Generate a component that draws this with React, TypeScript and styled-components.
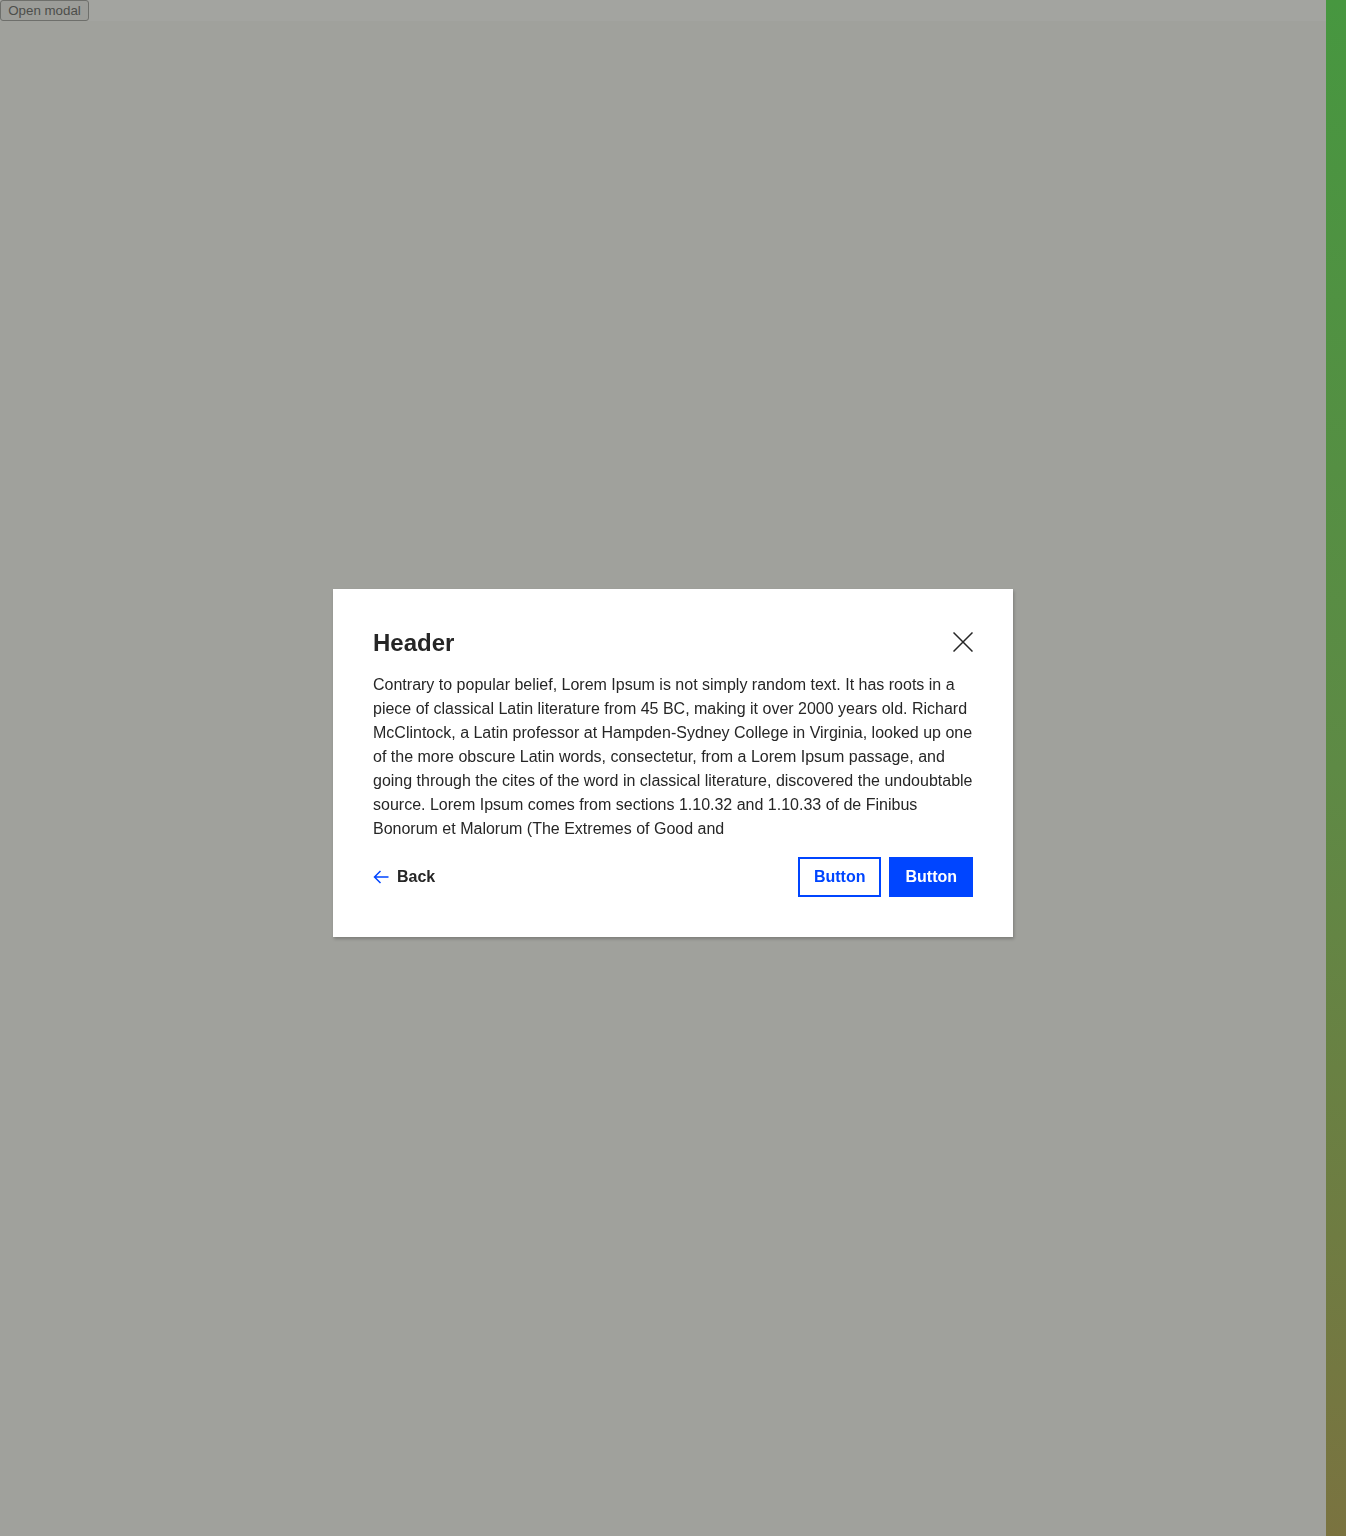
import React from 'react'
import styled, { createGlobalStyle } from 'styled-components'

const GlobalStyle = createGlobalStyle`
  html, body {
    margin: 0;
    padding: 0;
  }
  body {
    font-family: "Liberation Sans", Arial, sans-serif;
    background: #a0a19c;
  }
`

const Page = styled.div`
  display: flex;
  width: 1346px;
  height: 1536px;
  overflow: hidden;
`

const Main = styled.div`
  flex: 1;
  display: flex;
  flex-direction: column;
  background: #a0a19c;
`

const TopBar = styled.div`
  height: 21px;
  background: #a3a4a0;
  display: flex;
  align-items: flex-start;
`

const OpenButton = styled.button`
  font-family: "Liberation Sans", Arial, sans-serif;
  font-size: 13.33px;
  height: 21px;
  width: 89px;
  padding: 0 7px;
  margin: 0;
  color: #4d4e4b;
  background: #9c9d99;
  border: 1px solid #6e6f6b;
  border-radius: 3px;
  line-height: 19px;
  text-align: center;
`

const SideStrip = styled.div`
  width: 20px;
  background: linear-gradient(180deg, #479740 0%, #5e8a45 50%, #7a7340 100%);
`

// overlay spans the whole viewport so the dialog centres on it
const Overlay = styled.div`
  position: fixed;
  left: 0;
  top: 0;
  width: 1346px;
  height: 1536px;
  display: flex;
  align-items: center;
  justify-content: center;
  padding-bottom: 10px;
  box-sizing: border-box;
  pointer-events: none;
`

const Modal = styled.div`
  width: 680px;
  box-sizing: border-box;
  padding: 40px;
  background: #ffffff;
  box-shadow: 1px 2px 3px rgba(0, 0, 0, 0.22);
  display: flex;
  flex-direction: column;
  color: #262626;
  pointer-events: auto;
`

const HeaderRow = styled.div`
  display: flex;
  align-items: center;
  justify-content: space-between;
  height: 28px;
  margin-bottom: 16px;
`

const Title = styled.h2`
  margin: 0;
  font-size: 24px;
  line-height: 28px;
  font-weight: 700;
  color: #262626;
`

const CloseButton = styled.button`
  width: 20px;
  height: 20px;
  padding: 0;
  border: 0;
  background: none;
  display: flex;
  align-items: center;
  justify-content: center;
  margin-top: -3px;
  cursor: pointer;
`

const Body = styled.p`
  margin: 0;
  font-size: 16px;
  line-height: 24px;
  color: #262626;
`

const Footer = styled.div`
  margin-top: 16px;
  display: flex;
  align-items: center;
  justify-content: space-between;
`

const BackLink = styled.button`
  display: flex;
  align-items: center;
  gap: 8px;
  padding: 0;
  border: 0;
  background: none;
  font-family: "Liberation Sans", Arial, sans-serif;
  font-size: 16px;
  font-weight: 700;
  color: #262626;
  cursor: pointer;
`

const Actions = styled.div`
  display: flex;
  gap: 8px;
`

const ActionButton = styled.button<{ $primary?: boolean }>`
  height: 40px;
  padding: 0 14px;
  box-sizing: border-box;
  font-family: "Liberation Sans", Arial, sans-serif;
  font-size: 16px;
  font-weight: 700;
  border: 2px solid #0045ff;
  border-radius: 0;
  background: ${p => (p.$primary ? '#0045ff' : '#ffffff')};
  color: ${p => (p.$primary ? '#ffffff' : '#0045ff')};
  cursor: pointer;
`

const text =
  'Contrary to popular belief, Lorem Ipsum is not simply random text. It has roots in a piece of classical Latin literature from 45 BC, making it over 2000 years old. Richard McClintock, a Latin professor at Hampden-Sydney College in Virginia, looked up one of the more obscure Latin words, consectetur, from a Lorem Ipsum passage, and going through the cites of the word in classical literature, discovered the undoubtable source. Lorem Ipsum comes from sections 1.10.32 and 1.10.33 of de Finibus Bonorum et Malorum (The Extremes of Good and'

export default function App() {
  return (
    <>
      <GlobalStyle />
      <Page>
        <Main>
          <TopBar>
            <OpenButton>Open modal</OpenButton>
          </TopBar>
        </Main>
        <SideStrip />
      </Page>
      <Overlay>
        <Modal>
          <HeaderRow>
            <Title>Header</Title>
            <CloseButton aria-label="Close">
              <svg width="20" height="20" viewBox="0 0 20 20">
                <path d="M0.5 0.5 L19.5 19.5 M19.5 0.5 L0.5 19.5" stroke="#262626" strokeWidth="1.5" fill="none" />
              </svg>
            </CloseButton>
          </HeaderRow>
          <Body>{text}</Body>
          <Footer>
            <BackLink>
              <svg width="16" height="16" viewBox="0 0 16 16">
                <path d="M15.5 8 H1.5 M7.5 2 L1.5 8 L7.5 14" stroke="#0045ff" strokeWidth="1.5" fill="none" />
              </svg>
              Back
            </BackLink>
            <Actions>
              <ActionButton>Button</ActionButton>
              <ActionButton $primary>Button</ActionButton>
            </Actions>
          </Footer>
        </Modal>
      </Overlay>
    </>
  )
}
